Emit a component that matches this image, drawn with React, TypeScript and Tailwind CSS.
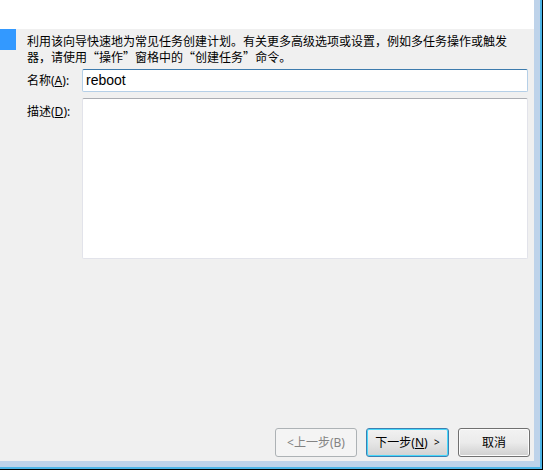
import React from 'react';

const font = { fontFamily: '"Noto Sans", "Noto Sans CJK SC", sans-serif' };

function WinButton({
  children,
  width,
  variant = 'normal',
}: {
  children: React.ReactNode;
  width: string;
  variant?: 'normal' | 'default' | 'disabled';
}) {
  const frame =
    variant === 'disabled'
      ? 'border-[#adb2b5] text-[#838383] bg-[#f4f4f4]'
      : variant === 'default'
        ? 'border-[#3c7fb1] text-black bg-gradient-to-b from-[#f2f2f2] via-[#e6e6e6] to-[#d2d2d2] shadow-[inset_0_0_0_1px_#48d8fb]'
        : 'border-[#707070] text-black bg-gradient-to-b from-[#f2f2f2] via-[#ebebeb] to-[#cfcfcf] shadow-[inset_0_0_0_1px_#fcfcfc]';
  return (
    <div className={`${width} h-[29px] flex items-center justify-center rounded-[3px] border text-[12px] ${frame}`}>
      {children}
    </div>
  );
}

const Q = ({ children }: { children: React.ReactNode }) => (
  <span className="[font-feature-settings:'fwid']">{children}</span>
);

export default function App() {
  return (
    <div className="w-[543px] h-[470px] flex border-r border-b border-black" style={font}>
      <div className="flex-1 flex flex-col bg-[#bed3ea] pr-[6px] pb-[6px] border-r-2 border-b-2 border-[#4cb4e6]">
        <div className="flex-1 flex flex-col">
          <div className="h-[29px] bg-white" />
          <div className="flex-1 flex flex-col bg-[#f0f0f0] text-[12px] text-black">
            <div className="flex">
              <div className="w-[16px] h-[21px] bg-[#3399ff]" />
              <p className="ml-[11px] pt-[4px] leading-[16px] [font-family:'Noto_Sans_CJK_SC',sans-serif]">
                利用该向导快速地为常见任务创建计划。有关更多高级选项或设置，例如多任务操作或触发
                <br />
                器，请使用<Q>“</Q>操作<Q>”</Q>窗格中的<Q>“</Q>创建任务<Q>”</Q>命令。
              </p>
            </div>
            <div className="flex items-center mt-[4px] pl-[27px]">
              <span className="w-[55px]">
                名称(<span className="underline">A</span>):
              </span>
              <div className="w-[446px] h-[23px] flex items-center pl-[3px] rounded-[2px] bg-white border border-[#b5cfe7] border-t-[#3d7bad] text-[14px]" style={{ fontFamily: '"Liberation Sans", sans-serif' }}>
                reboot
              </div>
            </div>
            <div className="flex mt-[6px] pl-[27px]">
              <span className="w-[55px] pt-[5px]">
                描述(<span className="underline">D</span>):
              </span>
              <div className="w-[446px] h-[161px] rounded-[2px] bg-white border border-[#e2e3ea] border-t-[#abadb3]" />
            </div>
            <div className="flex-1" />
            <div className="flex justify-end gap-[9px] pr-[4px] pb-[4px]">
              <WinButton width="w-[82px]" variant="disabled">
                &lt;上一步(B)
              </WinButton>
              <WinButton width="w-[83px]" variant="default">
                下一步(<span className="underline">N</span>)&nbsp;&nbsp;<span className="text-[10px]">&gt;</span>
              </WinButton>
              <WinButton width="w-[72px]">取消</WinButton>
            </div>
          </div>
        </div>
      </div>
    </div>
  );
}
